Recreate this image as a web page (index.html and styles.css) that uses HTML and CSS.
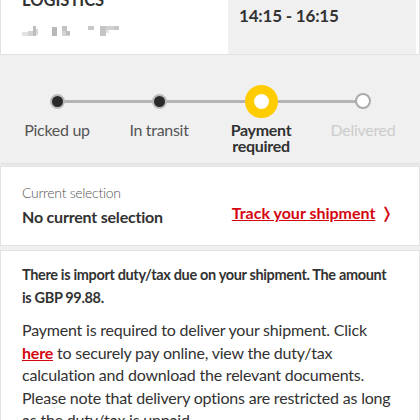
FILE: index.html
```html
<!DOCTYPE html>
<html lang="en">
<head>
    <meta charset="UTF-8">
    <meta name="viewport" content="width=device-width, initial-scale=1.0">
    <title>Shipment status</title>
    <link rel="stylesheet" href="styles.css">
</head>
<body>
    <div class="page">
        <section class="delivery-card">
            <div class="carrier">
                <div class="carrier-name">LOGISTICS</div>
                <svg class="carrier-ref" width="110" height="14" viewBox="0 0 110 14">
                    <rect x="0" y="6" width="6" height="4" fill="#e2e2e2"/>
                    <rect x="6" y="5" width="5" height="5" fill="#d2d2d2"/>
                    <rect x="11" y="0" width="3" height="10" fill="#bdbdbd"/>
                    <rect x="14" y="3" width="2" height="6" fill="#d8d8d8"/>
                    <rect x="30" y="1" width="5" height="9" fill="#b8b8b8"/>
                    <rect x="40" y="0" width="5" height="5" fill="#c4c4c4"/>
                    <rect x="40" y="5" width="8" height="5" fill="#d4d4d4"/>
                    <rect x="44" y="5" width="4" height="4" fill="#bcbcbc"/>
                    <rect x="66" y="0" width="6" height="4" fill="#c8c8c8"/>
                    <rect x="78" y="0" width="6" height="10" fill="#c4c4c4"/>
                    <rect x="84" y="0" width="8" height="4" fill="#d0d0d0"/>
                    <rect x="84" y="4" width="3" height="3" fill="#e4e4e4"/>
                    <rect x="92" y="0" width="5" height="4" fill="#c6c6c6"/>
                </svg>
            </div>
            <div class="time-slot">14:15 - 16:15</div>
        </section>

        <section class="tracker">
            <ol class="steps">
                <li class="step done"><span class="dot"></span><span class="label">Picked up</span></li>
                <li class="step done"><span class="dot"></span><span class="label">In transit</span></li>
                <li class="step current"><span class="dot"></span><span class="label">Payment required</span></li>
                <li class="step todo"><span class="dot"></span><span class="label">Delivered</span></li>
            </ol>
        </section>

        <section class="selection-card">
            <div>
                <p class="selection-title">Current selection</p>
                <p class="selection-value">No current selection</p>
            </div>
            <a href="#" class="track-link">Track your shipment</a><span class="chevron">&#x276D;</span>
        </section>

        <section class="notice-card">
            <p class="notice-lead">There is import duty/tax due on your shipment. The amount is GBP 99.88.</p>
            <p class="notice-body">Payment is required to deliver your shipment. Click <a href="#">here</a> to securely pay online, view the duty/tax calculation and download the relevant documents. Please note that delivery options are restricted as long as the duty/tax is unpaid.</p>
        </section>
    </div>
</body>
</html>
```

FILE: styles.css
```css
:root {
    --page-background: #f0f0f0;
    --card-background: #ffffff;
    --card-border: #e2e2e2;
    --text-color: #323232;
    --muted-text: #555555;
    --disabled-text: #cccccc;
    --dhl-red: #d40511;
    --dhl-yellow: #ffcc00;
    --track-line: #b4b4b4;
}

*, *::before, *::after {
    margin: 0;
    padding: 0;
    box-sizing: border-box;
}

body {
    font-family: Lato, 'Noto Sans', sans-serif;
    background-color: var(--page-background);
    color: var(--text-color);
    overflow: hidden;
}

.page {
    margin-top: -10px; /* page is scrolled a little */
}

.delivery-card {
    display: flex;
    background-color: var(--card-background);
    border: 1px solid var(--card-border);
    border-top: none;
    height: 65px;
    padding-right: 3px;
}

.carrier {
    width: 227px;
    padding-left: 21px;
}

.carrier-name {
    font-size: 16.5px;
    font-weight: 700;
    line-height: 20px;
}

.carrier-ref {
    display: block;
    margin-top: 16px;
}

.time-slot {
    flex: 1;
    background-color: var(--page-background);
    padding: 15px 0 0 11px;
    font-size: 17px;
    font-weight: 700;
    line-height: 22px;
    letter-spacing: -0.2px;
}

/* status tracker */

.tracker {
    margin-top: 2px;
    padding: 27px 6px 0;
    height: 106px;
    box-shadow: 0 2px 2px rgba(0, 0, 0, 0.06);
}

.steps {
    list-style: none;
    display: grid;
    grid-template-columns: repeat(4, 1fr);
    position: relative;
}

.steps::before {
    content: "";
    position: absolute;
    left: 12.5%;
    right: 12.5%;
    top: 16px;
    height: 3px;
    background-color: var(--track-line);
}

.step {
    display: flex;
    flex-direction: column;
    align-items: center;
    position: relative;
}

.dot {
    height: 34px;
    display: flex;
    align-items: center;
    justify-content: center;
}

.dot::after {
    content: "";
    display: block;
    border-radius: 50%;
}

.done .dot::after {
    width: 15px;
    height: 15px;
    background-color: #2a2a2a;
    border: 2px solid #b9b9b9;
}

.current .dot::after {
    width: 33px;
    height: 33px;
    background-color: #ffffff;
    border: 9px solid var(--dhl-yellow);
}

.todo .dot::after {
    width: 16px;
    height: 16px;
    background-color: #ffffff;
    border: 2px solid #aaaaaa;
}

.label {
    margin-top: 4px;
    font-size: 16px;
    line-height: 16px;
    letter-spacing: -0.3px;
    text-align: center;
    color: var(--muted-text);
    width: 80px;
}

.current .label {
    font-weight: 700;
    color: var(--text-color);
}

.todo .label {
    color: var(--disabled-text);
}

/* current selection */

.selection-card {
    margin-top: 3px;
    display: flex;
    align-items: flex-end;
    background-color: var(--card-background);
    border: 1px solid var(--card-border);
    padding: 17px 26px 18px 21px;
}

.selection-card > div {
    flex: 1;
}

.selection-title {
    font-size: 14px;
    font-weight: 300;
    line-height: 18px;
    letter-spacing: -0.3px;
    color: var(--muted-text);
}

.selection-value {
    margin-top: 5px;
    font-size: 16px;
    font-weight: 700;
    line-height: 20px;
    letter-spacing: -0.2px;
}

.track-link {
    color: var(--dhl-red);
    font-size: 16px;
    font-weight: 700;
    line-height: 20px;
    margin-bottom: 4px;
}

.chevron {
    color: var(--dhl-red);
    font-family: 'DejaVu Sans', sans-serif;
    font-size: 15px;
    line-height: 20px;
    margin: 0 0 4px 5px;
}

/* duty notice */

.notice-card {
    margin-top: 4px;
    background-color: var(--card-background);
    border: 1px solid var(--card-border);
    padding: 12px 21px;
}

.notice-lead {
    font-size: 14.5px;
    font-weight: 700;
    line-height: 23px;
    letter-spacing: -0.35px;
}

.notice-body {
    margin-top: 10px;
    font-size: 16px;
    line-height: 22.5px;
    letter-spacing: -0.2px;
}

.notice-body a {
    color: var(--dhl-red);
    font-weight: 700;
}
```
